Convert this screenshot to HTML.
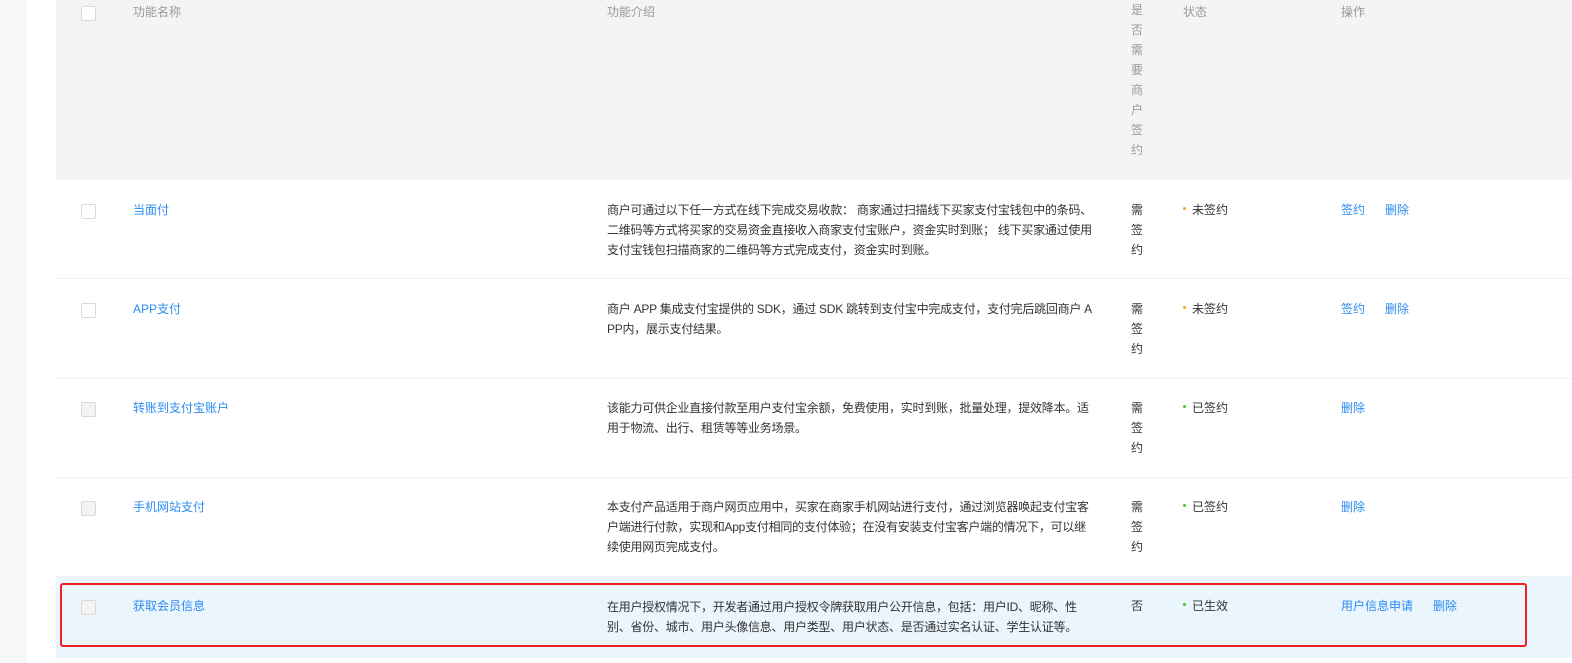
<!DOCTYPE html>
<html><head><meta charset="utf-8"><style>
html,body{margin:0;padding:0;width:1572px;height:663px;overflow:hidden;background:#fff;font-family:"Liberation Sans","Noto Sans CJK SC",sans-serif;font-size:12px;color:#333}
.a{position:absolute;white-space:nowrap;line-height:20px}
.lstrip{position:absolute;left:0;top:0;width:27px;height:663px;background:#f6f7f9}
.head{position:absolute;left:56px;top:0;width:1516px;height:180px;background:#f4f4f4}
.h{color:#999}
.sep{position:absolute;left:56px;width:1516px;height:1px;background:#f0f0f0}
.cb{position:absolute;left:81px;width:13px;height:13px;border:1px solid #d9d9d9;border-radius:2px;background:#fff}
.cb.dis{background:#f3f3f3}
.lk{color:#2d8cf0}
.d{letter-spacing:-0.25px}
.dot{display:inline-block;width:3px;height:3px;border-radius:50%;margin-right:6px;vertical-align:middle;position:relative;top:-2px}
</style></head><body>
<div class="lstrip"></div>
<div class="head"></div>
<div class="cb" style="top:6px"></div>
<div class="a h" style="left:133px;top:2px">功能名称</div>
<div class="a h" style="left:607px;top:2px">功能介绍</div>
<div class="a h" style="left:1131px;top:0px;white-space:normal;width:14px">是<br>否<br>需<br>要<br>商<br>户<br>签<br>约</div>
<div class="a h" style="left:1183px;top:2px">状态</div>
<div class="a h" style="left:1341px;top:2px">操作</div>

<!-- row1 -->
<div class="cb" style="top:204px"></div>
<div class="a lk" style="left:133px;top:200px">当面付</div>
<div class="a d" style="left:607px;top:200px">商户可通过以下任一方式在线下完成交易收款： 商家通过扫描线下买家支付宝钱包中的条码、<br>二维码等方式将买家的交易资金直接收入商家支付宝账户，资金实时到账； 线下买家通过使用<br>支付宝钱包扫描商家的二维码等方式完成支付，资金实时到账。</div>
<div class="a" style="left:1131px;top:200px">需<br>签<br>约</div>
<div class="a" style="left:1183px;top:200px"><span class="dot" style="background:#f5a623"></span>未签约</div>
<div class="a lk" style="left:1341px;top:200px">签约&nbsp;&nbsp;&nbsp;&nbsp;&nbsp;&nbsp;删除</div>
<div class="sep" style="top:278px"></div>

<!-- row2 -->
<div class="cb" style="top:303px"></div>
<div class="a lk" style="left:133px;top:299px">APP支付</div>
<div class="a d" style="left:607px;top:299px">商户 APP 集成支付宝提供的 SDK，通过 SDK 跳转到支付宝中完成支付，支付完后跳回商户 A<br>PP内，展示支付结果。</div>
<div class="a" style="left:1131px;top:299px">需<br>签<br>约</div>
<div class="a" style="left:1183px;top:299px"><span class="dot" style="background:#f5a623"></span>未签约</div>
<div class="a lk" style="left:1341px;top:299px">签约&nbsp;&nbsp;&nbsp;&nbsp;&nbsp;&nbsp;删除</div>
<div class="sep" style="top:378px"></div>

<!-- row3 -->
<div class="cb dis" style="top:402px"></div>
<div class="a lk" style="left:133px;top:398px">转账到支付宝账户</div>
<div class="a d" style="left:607px;top:398px">该能力可供企业直接付款至用户支付宝余额，免费使用，实时到账，批量处理，提效降本。适<br>用于物流、出行、租赁等等业务场景。</div>
<div class="a" style="left:1131px;top:398px">需<br>签<br>约</div>
<div class="a" style="left:1183px;top:398px"><span class="dot" style="background:#52c41a"></span>已签约</div>
<div class="a lk" style="left:1341px;top:398px">删除</div>
<div class="sep" style="top:477px"></div>

<!-- row4 -->
<div class="cb dis" style="top:501px"></div>
<div class="a lk" style="left:133px;top:497px">手机网站支付</div>
<div class="a d" style="left:607px;top:497px">本支付产品适用于商户网页应用中，买家在商家手机网站进行支付，通过浏览器唤起支付宝客<br>户端进行付款，实现和App支付相同的支付体验；在没有安装支付宝客户端的情况下，可以继<br>续使用网页完成支付。</div>
<div class="a" style="left:1131px;top:497px">需<br>签<br>约</div>
<div class="a" style="left:1183px;top:497px"><span class="dot" style="background:#52c41a"></span>已签约</div>
<div class="a lk" style="left:1341px;top:497px">删除</div>
<div class="sep" style="top:576px"></div>

<!-- row5 highlighted -->
<div style="position:absolute;left:56px;top:577px;width:1516px;height:81px;background:#eaf5fd"></div>
<div style="position:absolute;left:60px;top:583px;width:1463px;height:60px;border:2px solid #f02020;border-radius:3px"></div>
<div class="cb dis" style="top:600px"></div>
<div class="a lk" style="left:133px;top:596px">获取会员信息</div>
<div class="a d" style="left:607px;top:597px">在用户授权情况下，开发者通过用户授权令牌获取用户公开信息，包括：用户ID、昵称、性<br>别、省份、城市、用户头像信息、用户类型、用户状态、是否通过实名认证、学生认证等。</div>
<div class="a" style="left:1131px;top:596px">否</div>
<div class="a" style="left:1183px;top:596px"><span class="dot" style="background:#52c41a"></span>已生效</div>
<div class="a lk" style="left:1341px;top:596px">用户信息申请&nbsp;&nbsp;&nbsp;&nbsp;&nbsp;&nbsp;删除</div>
</body></html>
